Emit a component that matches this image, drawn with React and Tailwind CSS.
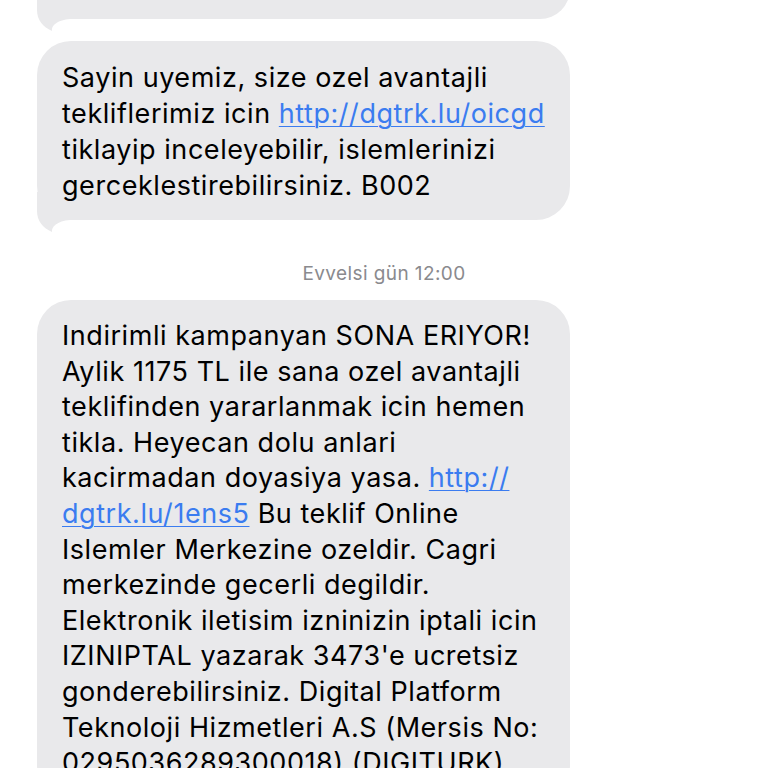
import React from "react";

const font = { fontFamily: '"Inter", "Noto Sans", sans-serif' };

function Tail() {
  return (
    <svg
      className="absolute left-0 bottom-[-12px]"
      width="40"
      height="40"
      viewBox="0 0 40 40"
      fill="#e9e9eb"
    >
      <path d="M0 0 L0 19 C0 29 6 36 15 40 C14 35 20 29 33 28 L40 28 L40 0 Z" />
    </svg>
  );
}

function Link({ children }) {
  return <span className="text-[#3b7cf0] underline decoration-1 underline-offset-[3px]">{children}</span>;
}

function Bubble({ lines, className = "" }) {
  return (
    <div className={"relative w-[533px] bg-[#e9e9eb] rounded-[34px] " + className}>
      <div className="relative z-10 text-[27px] tracking-[0.55px] text-black">
        {lines.map((l, i) => (
          <div key={i} className="whitespace-nowrap">
            {l}
          </div>
        ))}
      </div>
      <Tail />
    </div>
  );
}

export default function App() {
  return (
    <div className="w-[768px] h-[768px] overflow-hidden bg-white" style={font}>
      <div className="flex flex-col items-start pl-[37px]">
        <div className="relative w-[533px] h-[60px] -mt-[41px] bg-[#e9e9eb] rounded-[34px]">
          <Tail />
        </div>

        <Bubble
          className="mt-[22px] pl-[25px] pt-[19px] pb-[16px] leading-[36px]"
          lines={[
            "Sayin uyemiz, size ozel avantajli",
            <>tekliflerimiz icin <Link>http://dgtrk.lu/oicgd</Link></>,
            "tiklayip inceleyebilir, islemlerinizi",
            "gerceklestirebilirsiniz. B002",
          ]}
        />

        <div className="w-[768px] -ml-[37px] flex justify-center mt-[42px] mb-[14px]">
          <span className="text-[19px] tracking-[0.4px] leading-[24px] text-[#8a8a8e]">Evvelsi gün 12:00</span>
        </div>

        <Bubble
          className="pl-[25px] pt-[18px] pb-[18px] leading-[35.6px]"
          lines={[
            "Indirimli kampanyan SONA ERIYOR!",
            "Aylik 1175 TL ile sana ozel avantajli",
            "teklifinden yararlanmak icin hemen",
            "tikla. Heyecan dolu anlari",
            <>kacirmadan doyasiya yasa. <Link>http://</Link></>,
            <><Link>dgtrk.lu/1ens5</Link> Bu teklif Online</>,
            "Islemler Merkezine ozeldir. Cagri",
            "merkezinde gecerli degildir.",
            "Elektronik iletisim izninizin iptali icin",
            "IZINIPTAL yazarak 3473'e ucretsiz",
            "gonderebilirsiniz. Digital Platform",
            "Teknoloji Hizmetleri A.S (Mersis No:",
            "0295036289300018) (DIGITURK)",
            "",
          ]}
        />
      </div>
    </div>
  );
}
